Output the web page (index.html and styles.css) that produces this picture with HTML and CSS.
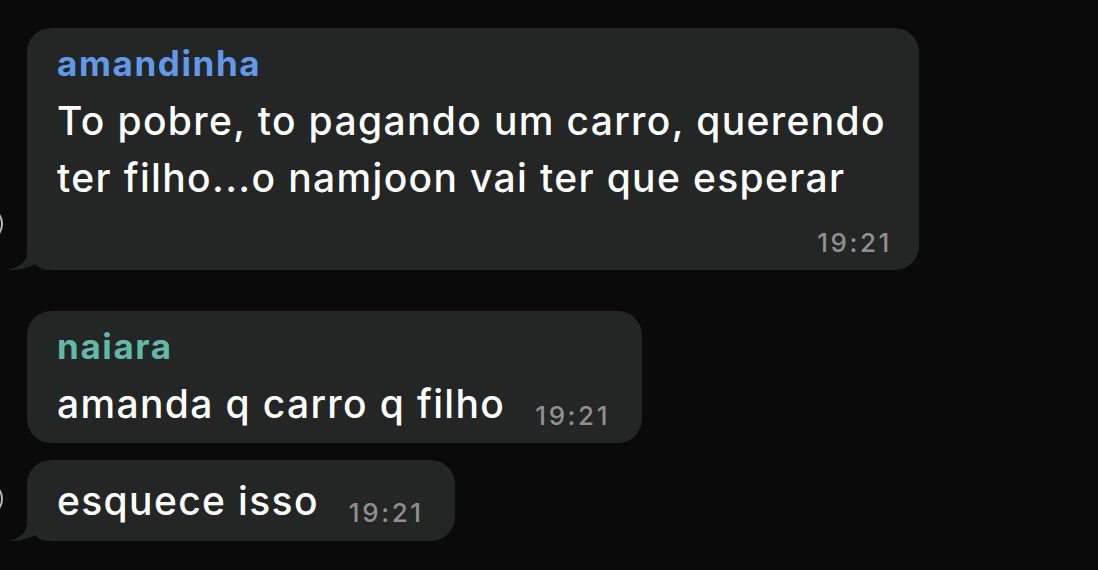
FILE: index.html
```html
<!DOCTYPE html>
<html lang="pt">
<head>
  <meta charset="UTF-8">
  <title>Conversa</title>
  <link rel="stylesheet" href="styles.css">
</head>
<body>
  <div class="chat">
    <div class="row first">
      <span class="avatar"></span>
      <div class="bubble tailed">
        <div class="name blue">amandinha</div>
        <div class="text">To pobre, to pagando um carro, querendo<br>ter filho...o namjoon vai ter que esperar</div>
        <div class="time block">19:21</div>
        <svg class="tail" width="40" height="30" viewBox="0 0 40 30"><path d="M19 0 V12 C19 21 13 27 0 30 C10 30 20 28 27 24 C31 28 35 30 40 30 V0 Z" fill="#242525"/></svg>
      </div>
    </div>

    <div class="row second">
      <span class="avatar hidden"></span>
      <div class="bubble">
        <div class="name teal">naiara</div>
        <div class="text">amanda q carro q filho<span class="time">19:21</span></div>
      </div>
    </div>

    <div class="row third">
      <span class="avatar"></span>
      <div class="bubble tailed">
        <div class="text">esquece isso<span class="time">19:21</span></div>
        <svg class="tail" width="40" height="30" viewBox="0 0 40 30"><path d="M19 0 V12 C19 21 13 27 0 30 C10 30 20 28 27 24 C31 28 35 30 40 30 V0 Z" fill="#242525"/></svg>
      </div>
    </div>
  </div>
</body>
</html>
```

FILE: styles.css
```css
* { margin: 0; padding: 0; box-sizing: border-box; }
body {
  background: #0b0a0a;
  font-family: Inter, "Noto Sans", sans-serif;
  width: 1098px; height: 570px; overflow: hidden;
}
.chat { display: flex; flex-direction: column; padding-top: 28px; }
.row { display: flex; align-items: flex-end; }
.second { margin-top: 41px; }
.third { margin-top: 17px; }
.avatar {
  width: 36px; height: 36px; border-radius: 50%;
  margin-left: -33px; margin-right: 24px; margin-bottom: 28px;
  border: 2px solid #b9b9b9; flex-shrink: 0;
}
.avatar.hidden { visibility: hidden; }
.third .avatar { margin-bottom: 24px; }
.bubble {
  position: relative; background: #242525; border-radius: 24px;
  padding: 15px 30px 0 30px; color: #fff;
}
.first .bubble { width: 892px; height: 242px; }
.second .bubble { width: 615px; height: 132px; }
.third .bubble { width: 428px; height: 81px; padding-top: 12px; }
.name { font-size: 35px; font-weight: 700; line-height: 40px; letter-spacing: 1.6px; }
.blue { color: #6199e9; }
.teal { color: #62b8a7; }
.text { font-size: 39px; line-height: 57px; font-weight: 500; letter-spacing: 1.35px; margin-top: 9px; }
.third .text { margin-top: 0; }
.time {
  font-size: 26px; line-height: 30px; color: #8f8f90; font-weight: 500; letter-spacing: 2.6px;
  position: relative; top: 7px; margin-left: 30px;
}
.time.block { display: block; text-align: right; position: static; margin-top: 22px; margin-right: -3px; }
.tail { position: absolute; left: -19px; bottom: 0; }
```
